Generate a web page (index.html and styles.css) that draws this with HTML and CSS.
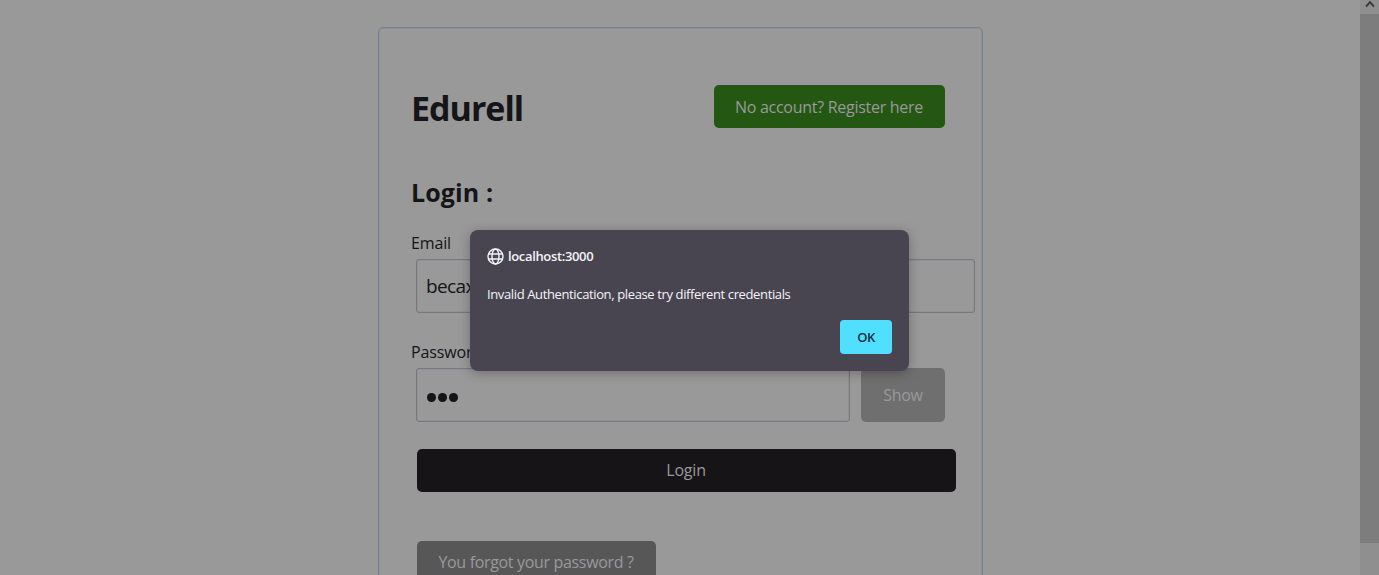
FILE: index.html
```html
<!DOCTYPE html>
<html lang="en">
<head>
<meta charset="utf-8">
<title>Edurell</title>
<link rel="stylesheet" href="styles.css">
</head>
<body>
<div class="page">
  <main class="viewport">
    <section class="card">
      <header class="card-header">
        <h1 class="brand"><span>Edurell</span></h1>
        <button class="btn btn-register"><span>No account? Register here</span></button>
      </header>
      <h2 class="title"><span>Login :</span></h2>
      <div class="label"><span>Email</span></div>
      <div class="field field-email"><span>becax</span></div>
      <div class="label label-password"><span>Password</span></div>
      <div class="password-row">
        <div class="field field-password"><i class="dot"></i><i class="dot"></i><i class="dot"></i></div>
        <button class="btn btn-show"><span>Show</span></button>
      </div>
      <button class="btn btn-login"><span>Login</span></button>
      <button class="btn btn-forgot"><span>You forgot your password ?</span></button>
    </section>
  </main>
  <aside class="scrollbar">
    <div class="scroll-up"><svg width="10" height="8" viewBox="0 0 10 8"><path d="M1 6.6 5 2.2l4 4.4" fill="none" stroke="#39393b" stroke-width="2"/></svg></div>
    <div class="scroll-thumb"></div>
  </aside>
</div>
<div class="dialog" role="alertdialog">
  <div class="dialog-origin">
    <svg class="globe" width="17" height="17" viewBox="0 0 17 17" fill="none" stroke="#f4f4f8" stroke-width="1.4"><circle cx="8.5" cy="8.5" r="7.5"/><ellipse cx="8.5" cy="8.5" rx="3.5" ry="7.5"/><path d="M1.5 6h14M1.5 11h14"/></svg>
    <span>localhost:3000</span>
  </div>
  <div class="dialog-message"><span>Invalid Authentication, please try different credentials</span></div>
  <button class="btn btn-ok"><span>OK</span></button>
</div>
</body>
</html>
```
FILE: styles.css
```css
* { box-sizing: border-box; }
body {
  margin: 0;
  height: 575px;
  overflow: hidden;
  background: #99999a;
  color: #151417;
  font-family: "Open Sans", "Noto Sans", sans-serif;
}
.page { display: flex; height: 575px; overflow: hidden; }
.viewport { flex: 1; padding: 27px 0 0 378px; }
.card {
  width: 604.5px;
  height: 640px;
  padding: 56px 5px 0 32px;
  border: 1px solid #758093;
  border-radius: 5px;
  box-shadow: inset 0 0 0 0.5px #858c98;
}
.card-header { display: flex; justify-content: space-between; padding-right: 32px; height: 46px; padding-top: 1px; }
.brand, .title { margin: 0; font-weight: 700; white-space: nowrap; }
.brand { font-size: 34px; line-height: 46px; letter-spacing: -1px; }
.title { margin-top: 43px; font-size: 25px; line-height: 38px; letter-spacing: 0.1px; }
.label { margin-top: 20px; height: 24px; font-size: 16px; line-height: 24px; letter-spacing: -0.15px; white-space: nowrap; }
.label-password { margin-top: 27px; }
.field {
  display: flex;
  align-items: center;
  height: 54px;
  border: 1px solid #77777c;
  border-radius: 3px;
  padding: 0 0 1px 9px;
  font-size: 19px;
  letter-spacing: -0.6px;
  box-shadow: inset 0 0 0 0.5px #8b8b8f;
}
.field-email { width: 559px; margin: 4px 0 0 5px; }
.password-row { display: flex; gap: 11px; margin: 4px 0 0 5px; }
.field-password { width: 434px; gap: 2.5px; padding: 4px 0 0 10px; }
.dot { width: 8.6px; height: 9px; border-radius: 50%; background: #151417; }
.btn {
  display: flex;
  align-items: center;
  justify-content: center;
  border: 0;
  padding: 0;
  border-radius: 5px;
  color: #99999a;
  font-family: inherit;
  font-size: 16px;
  white-space: nowrap;
}
.btn-register { width: 231px; height: 43px; background: #245812; letter-spacing: -0.28px; }
.btn-show { width: 84px; height: 54px; background: #6f6f70; letter-spacing: -0.3px; }
.btn-login { width: 539px; height: 43px; margin: 26.5px 0 0 5.5px; background: #161417; letter-spacing: -0.2px; }
.btn-forgot { width: 239px; height: 43px; margin: 49px 0 0 5.5px; background: #575758; letter-spacing: -0.33px; }
.scrollbar { width: 19px; background: #8f8f90; }
.scroll-up { display: flex; justify-content: center; height: 14px; }
.scroll-thumb { height: 529px; background: #7d7d7e; }
.dialog {
  position: absolute;
  left: 470px;
  top: 230px;
  width: 439px;
  height: 141px;
  padding: 17px 17px 0;
  border-radius: 8px;
  background: #484551;
  color: #f4f4f8;
  box-shadow: 0 2px 12px rgba(0, 0, 0, 0.28);
  font-size: 13px;
  white-space: nowrap;
}
.dialog-origin { display: flex; align-items: center; gap: 4px; height: 19px; font-weight: 600; letter-spacing: -0.35px; }
.dialog-origin span { margin-top: -2px; }
.dialog-message { margin-top: 18px; height: 20px; line-height: 20px; letter-spacing: -0.37px; }
.btn-ok { width: 52px; height: 34px; margin: 16px 0 0 auto; border-radius: 4px; background: #50dfff; color: #17313a; font-size: 13px; font-weight: 600; letter-spacing: -0.4px; }
```
